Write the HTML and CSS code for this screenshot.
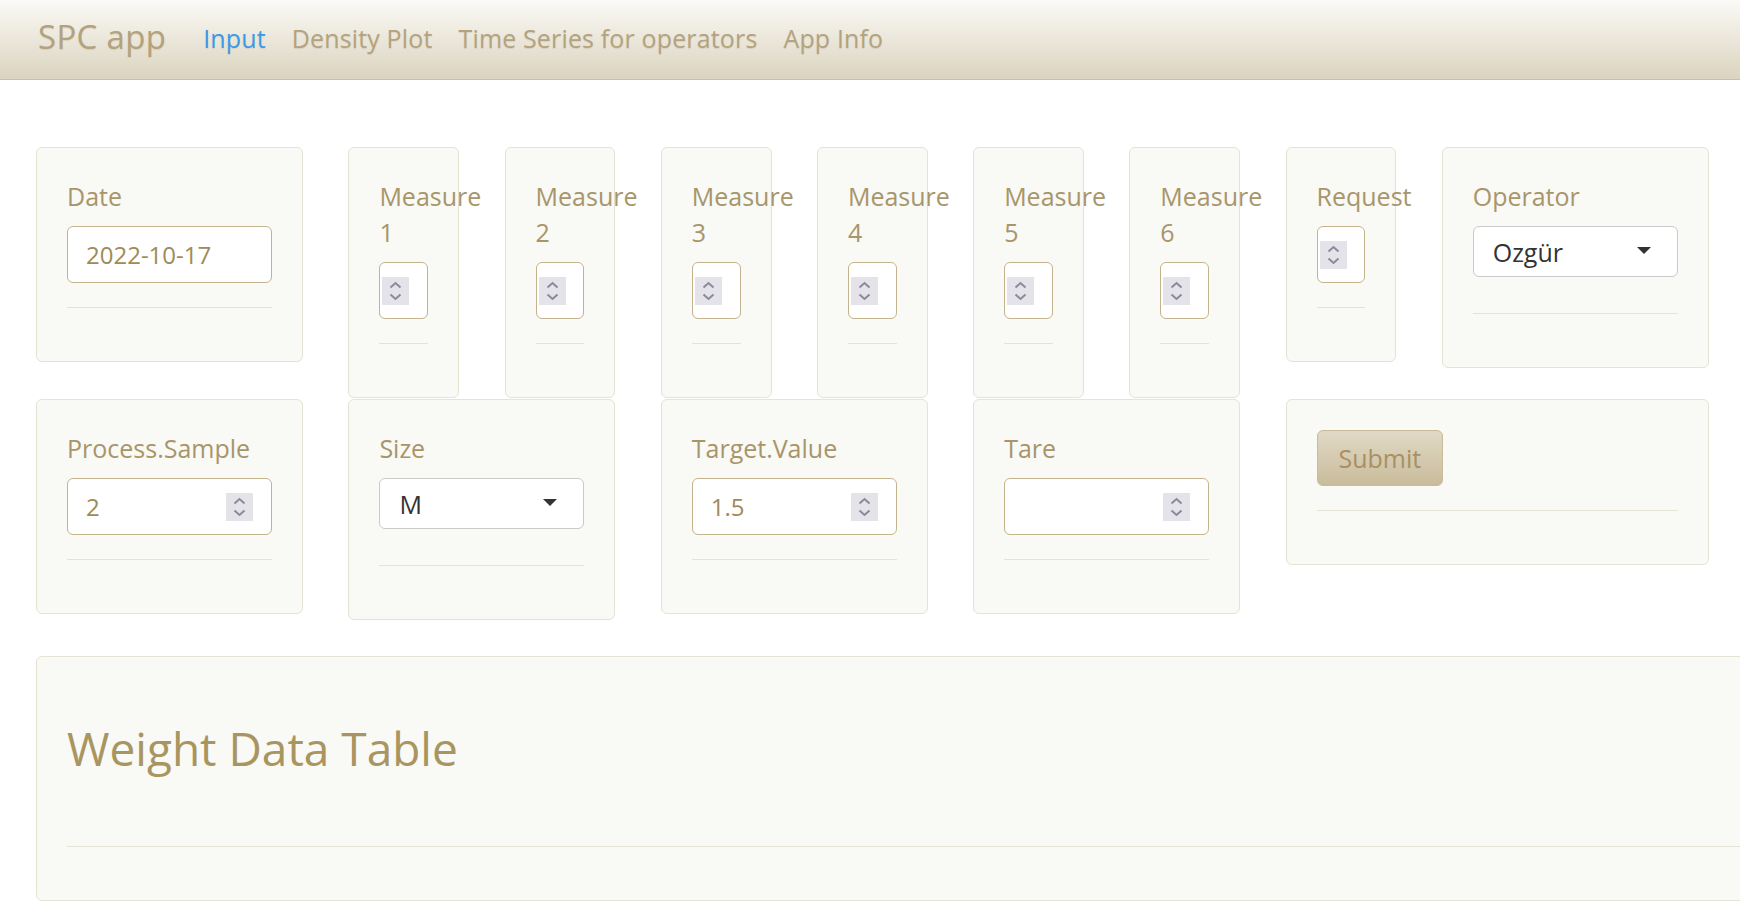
FILE: index.html
```html
<!DOCTYPE html>
<html lang="en">
<head>
<meta charset="utf-8">
<title>SPC app</title>
<link rel="stylesheet" href="styles.css">
</head>
<body>
<nav class="navbar">
  <span class="brand">SPC app</span>
  <ul class="nav">
    <li><a class="active" href="#">Input</a></li>
    <li><a href="#">Density Plot</a></li>
    <li><a href="#">Time Series for operators</a></li>
    <li><a href="#">App Info</a></li>
  </ul>
</nav>

<main class="main">
  <div class="row row-1">
    <div class="well span-2">
      <label class="field-label">Date</label>
      <div class="num-input"><input type="text" value="2022-10-17"></div>
      <hr>
    </div>
    <div class="well span-1">
      <label class="field-label">Measure 1</label>
      <div class="num-input narrow"><input type="text" value=""><svg class="spin" width="27" height="28" viewBox="0 0 27 28"><rect width="27" height="28" fill="#e4e3e9"/><path d="M8.5 10.5 13.5 6l5 4.5M8.5 17.5l5 4.5 5-4.5" fill="none" stroke="#8d8999" stroke-width="2"/></svg></div>
      <hr>
    </div>
    <div class="well span-1">
      <label class="field-label">Measure 2</label>
      <div class="num-input narrow"><input type="text" value=""><svg class="spin" width="27" height="28" viewBox="0 0 27 28"><rect width="27" height="28" fill="#e4e3e9"/><path d="M8.5 10.5 13.5 6l5 4.5M8.5 17.5l5 4.5 5-4.5" fill="none" stroke="#8d8999" stroke-width="2"/></svg></div>
      <hr>
    </div>
    <div class="well span-1">
      <label class="field-label">Measure 3</label>
      <div class="num-input narrow"><input type="text" value=""><svg class="spin" width="27" height="28" viewBox="0 0 27 28"><rect width="27" height="28" fill="#e4e3e9"/><path d="M8.5 10.5 13.5 6l5 4.5M8.5 17.5l5 4.5 5-4.5" fill="none" stroke="#8d8999" stroke-width="2"/></svg></div>
      <hr>
    </div>
    <div class="well span-1">
      <label class="field-label">Measure 4</label>
      <div class="num-input narrow"><input type="text" value=""><svg class="spin" width="27" height="28" viewBox="0 0 27 28"><rect width="27" height="28" fill="#e4e3e9"/><path d="M8.5 10.5 13.5 6l5 4.5M8.5 17.5l5 4.5 5-4.5" fill="none" stroke="#8d8999" stroke-width="2"/></svg></div>
      <hr>
    </div>
    <div class="well span-1">
      <label class="field-label">Measure 5</label>
      <div class="num-input narrow"><input type="text" value=""><svg class="spin" width="27" height="28" viewBox="0 0 27 28"><rect width="27" height="28" fill="#e4e3e9"/><path d="M8.5 10.5 13.5 6l5 4.5M8.5 17.5l5 4.5 5-4.5" fill="none" stroke="#8d8999" stroke-width="2"/></svg></div>
      <hr>
    </div>
    <div class="well span-1">
      <label class="field-label">Measure 6</label>
      <div class="num-input narrow"><input type="text" value=""><svg class="spin" width="27" height="28" viewBox="0 0 27 28"><rect width="27" height="28" fill="#e4e3e9"/><path d="M8.5 10.5 13.5 6l5 4.5M8.5 17.5l5 4.5 5-4.5" fill="none" stroke="#8d8999" stroke-width="2"/></svg></div>
      <hr>
    </div>
    <div class="well span-1">
      <label class="field-label nowrap">Request</label>
      <div class="num-input narrow"><input type="text" value=""><svg class="spin" width="27" height="28" viewBox="0 0 27 28"><rect width="27" height="28" fill="#e4e3e9"/><path d="M8.5 10.5 13.5 6l5 4.5M8.5 17.5l5 4.5 5-4.5" fill="none" stroke="#8d8999" stroke-width="2"/></svg></div>
      <hr>
    </div>
    <div class="well span-2">
      <label class="field-label">Operator</label>
      <div class="select"><span>Ozgür</span><svg class="caret" width="14" height="7" viewBox="0 0 14 7"><path d="M0 0h14L7 7z" fill="#333"/></svg></div>
      <hr>
    </div>
  </div>

  <div class="row row-2">
    <div class="well span-2">
      <label class="field-label">Process.Sample</label>
      <div class="num-input"><input type="text" value="2"><svg class="spin" width="27" height="28" viewBox="0 0 27 28"><rect width="27" height="28" fill="#e4e3e9"/><path d="M8.5 10.5 13.5 6l5 4.5M8.5 17.5l5 4.5 5-4.5" fill="none" stroke="#8d8999" stroke-width="2"/></svg></div>
      <hr>
    </div>
    <div class="well span-2">
      <label class="field-label">Size</label>
      <div class="select"><span>M</span><svg class="caret" width="14" height="7" viewBox="0 0 14 7"><path d="M0 0h14L7 7z" fill="#333"/></svg></div>
      <hr>
    </div>
    <div class="well span-2">
      <label class="field-label">Target.Value</label>
      <div class="num-input"><input type="text" value="1.5"><svg class="spin" width="27" height="28" viewBox="0 0 27 28"><rect width="27" height="28" fill="#e4e3e9"/><path d="M8.5 10.5 13.5 6l5 4.5M8.5 17.5l5 4.5 5-4.5" fill="none" stroke="#8d8999" stroke-width="2"/></svg></div>
      <hr>
    </div>
    <div class="well span-2">
      <label class="field-label">Tare</label>
      <div class="num-input"><input type="text" value=""><svg class="spin" width="27" height="28" viewBox="0 0 27 28"><rect width="27" height="28" fill="#e4e3e9"/><path d="M8.5 10.5 13.5 6l5 4.5M8.5 17.5l5 4.5 5-4.5" fill="none" stroke="#8d8999" stroke-width="2"/></svg></div>
      <hr>
    </div>
    <div class="well span-3">
      <button class="btn" type="button">Submit</button>
      <hr>
    </div>
  </div>

  <div class="row row-3">
    <div class="well span-12">
      <h2 class="table-title">Weight Data Table</h2>
      <hr>
    </div>
  </div>
</main>
</body>
</html>
```

FILE: styles.css
```css
* {
  box-sizing: border-box;
}

html,
body {
  margin: 0;
  overflow: hidden;
}

body {
  font-family: "Open Sans", "Liberation Sans", sans-serif;
  background: #ffffff;
  color: #a8956a;
}

/* ---------- navbar ---------- */
.navbar {
  display: flex;
  align-items: center;
  height: 80px;
  padding: 0 0 4px 38px;
  background: linear-gradient(#fbfaf6, #dbd3bf);
  border-bottom: 1px solid #cdbf9e;
}

.brand {
  font-size: 33px;
  letter-spacing: 0.3px;
  color: #b3a27d;
  margin-right: 24px;
  margin-bottom: 3px;
  text-shadow: 0 1px 1px rgba(120, 100, 60, 0.15);
}

.nav {
  display: flex;
  list-style: none;
  margin: 0;
  padding: 0;
}

.nav a {
  display: block;
  padding: 0 13px;
  font-size: 25px;
  letter-spacing: 0.15px;
  color: #b4a37e;
  text-decoration: none;
  text-shadow: 0 1px 1px rgba(120, 100, 60, 0.15);
}

.nav a.active {
  color: #3b9ae8;
}

/* ---------- layout ---------- */
.main {
  padding: 67px 0 0 36px;
}

.row {
  display: grid;
  grid-template-columns: repeat(12, 110.8px);
  column-gap: 45.4px;
  align-items: start;
}

.row-1 {
  margin-bottom: 1px;
}

.row-2 {
  margin-bottom: 36px;
}

.span-1 { grid-column: span 1; }
.span-2 { grid-column: span 2; }
.span-3 { grid-column: span 3; }
.span-12 { grid-column: span 12; }

/* ---------- wells ---------- */
.well {
  background: #f9f9f5;
  border: 1px solid #e6e2d4;
  border-radius: 6px;
  padding: 30px 30px 29px;
}

.field-label {
  display: block;
  font-size: 25px;
  line-height: 36px;
  margin-bottom: 12px;
  color: #a8956a;
}

.nowrap {
  white-space: nowrap;
}

hr {
  border: 0;
  border-top: 1px solid #e6e2d6;
  margin: 24px 0;
}

/* ---------- inputs ---------- */
.num-input {
  display: flex;
  align-items: center;
  height: 57px;
  padding: 0 18px;
  background: #ffffff;
  border: 1px solid #c4b48d;
  border-radius: 6px;
}

.num-input input {
  flex: 1;
  min-width: 0;
  border: 0;
  outline: 0;
  padding: 0;
  background: transparent;
  font-family: "Open Sans", "Liberation Sans", sans-serif;
  font-size: 24px;
  color: #a08a57;
}

.num-input.narrow {
  padding: 0 2px;
}

.num-input.narrow input {
  flex: 0 0 0;
  width: 0;
}

.spin {
  flex: none;
  display: block;
}

.select {
  display: flex;
  align-items: center;
  justify-content: space-between;
  height: 51px;
  margin-bottom: 36px;
  padding: 0 26px 0 19px;
  background: #ffffff;
  border: 1px solid #cacaca;
  border-radius: 6px;
  font-size: 25px;
  color: #333333;
}

.caret {
  display: block;
  flex: none;
  margin-top: -3px;
}

/* ---------- button ---------- */
.btn {
  display: block;
  height: 56px;
  padding: 0 21px;
  background: linear-gradient(#e1d9c6, #c9bc9b);
  border: 1px solid #c8bb9a;
  border-radius: 6px;
  font-family: "Open Sans", "Liberation Sans", sans-serif;
  font-size: 25px;
  color: #a89062;
}

/* ---------- table section ---------- */
.table-title {
  font-size: 46px;
  font-weight: 400;
  line-height: 54px;
  margin: 34px 0 71px;
  color: #a8955f;
  white-space: nowrap;
}
```
